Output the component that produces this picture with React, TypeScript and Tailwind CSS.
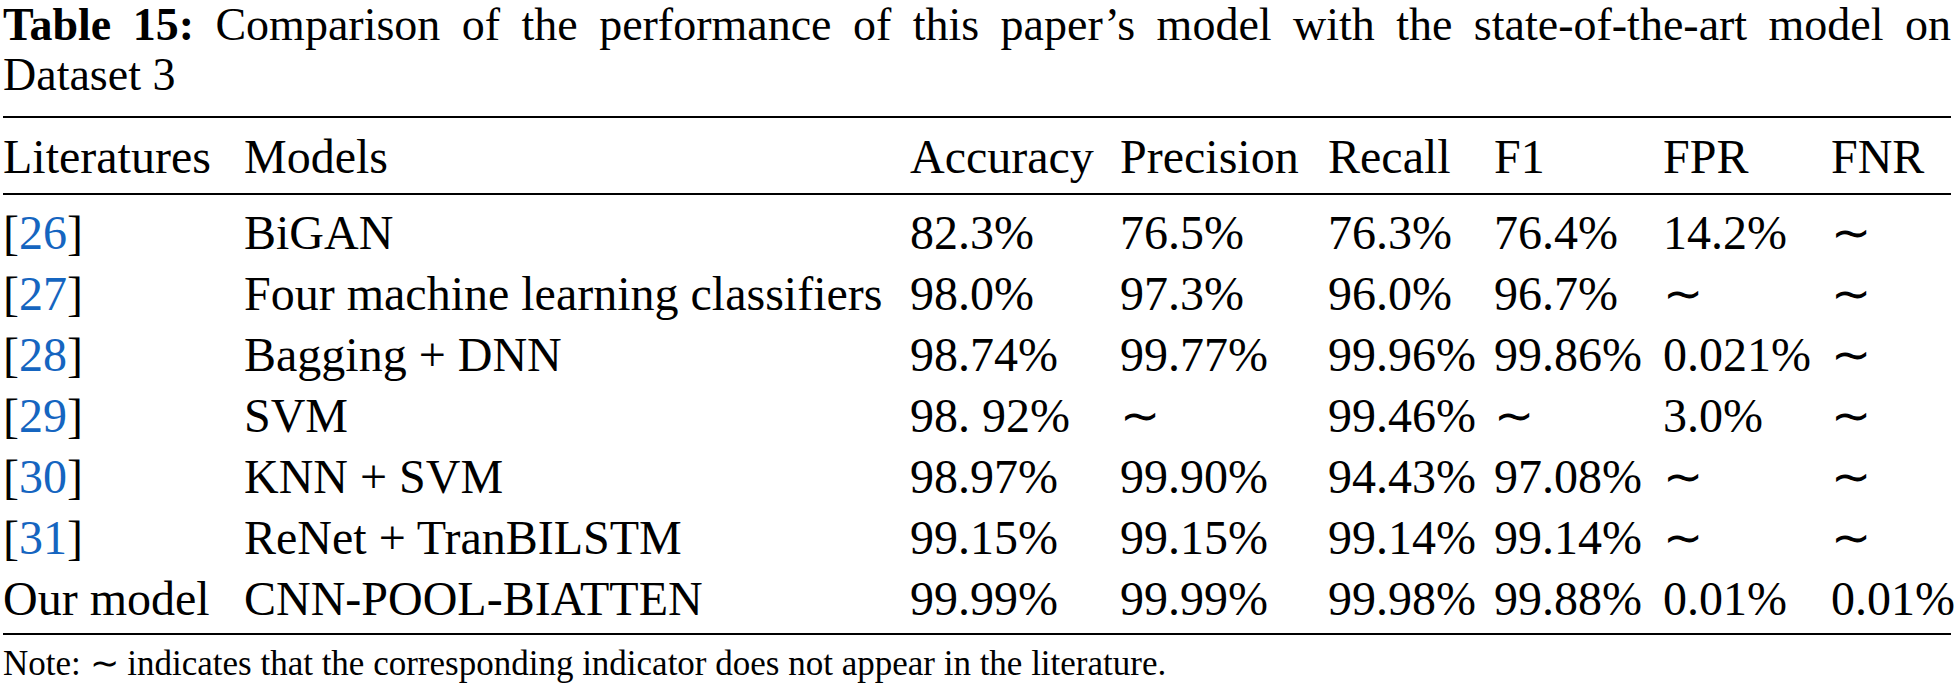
const T = "∼";

const rows = [
  { ref: "26", model: "BiGAN", vals: ["82.3%", "76.5%", "76.3%", "76.4%", "14.2%", T] },
  { ref: "27", model: "Four machine learning classifiers", vals: ["98.0%", "97.3%", "96.0%", "96.7%", T, T] },
  { ref: "28", model: "Bagging + DNN", vals: ["98.74%", "99.77%", "99.96%", "99.86%", "0.021%", T] },
  { ref: "29", model: "SVM", vals: ["98. 92%", T, "99.46%", T, "3.0%", T] },
  { ref: "30", model: "KNN + SVM", vals: ["98.97%", "99.90%", "94.43%", "97.08%", T, T] },
  { ref: "31", model: "ReNet + TranBILSTM", vals: ["99.15%", "99.15%", "99.14%", "99.14%", T, T] },
];

const headers = ["Literatures", "Models", "Accuracy", "Precision", "Recall", "F1", "FPR", "FNR"];

const gridCols = "grid grid-cols-[241px_666px_210px_208px_166px_169px_168px_1fr]";

const Rule = () => <div className="h-[2px] bg-black" />;

const Cell = ({ v }: { v: string }) => (
  <div className={`whitespace-nowrap ${v === T ? "font-extralight" : ""}`}>{v}</div>
);

export default function App() {
  return (
    <div className="w-[1954px] h-[692px] overflow-hidden bg-white px-[3px] text-black font-['Liberation_Serif']">
      <p className="text-[46px] leading-[50px] text-justify">
        <span className="font-bold">Table 15:</span> Comparison of the performance of this paper’s model with the
        state-of-the-art model on Dataset 3
      </p>

      <div className="mt-[16px]">
        <Rule />
        <div className={`${gridCols} pt-[8px] pb-[6px] text-[48px] leading-[61px]`}>
          {headers.map((h) => (
            <div key={h} className="whitespace-nowrap">{h}</div>
          ))}
        </div>
        <Rule />
        <div className="pt-[7px] pb-[4px] text-[48px] leading-[61px]">
          {rows.map((r) => (
            <div key={r.ref} className={gridCols}>
              <div>
                [<span className="text-[#1565c0]">{r.ref}</span>]
              </div>
              <div className="whitespace-nowrap">{r.model}</div>
              {r.vals.map((v, i) => (
                <Cell key={i} v={v} />
              ))}
            </div>
          ))}
          <div className={gridCols}>
            <div className="whitespace-nowrap">Our model</div>
            <div className="whitespace-nowrap">CNN-POOL-BIATTEN</div>
            {["99.99%", "99.99%", "99.98%", "99.88%", "0.01%", "0.01%"].map((v, i) => (
              <Cell key={i} v={v} />
            ))}
          </div>
        </div>
        <Rule />
      </div>

      <p className="mt-[9px] text-[35px] leading-[40px]">
        Note: <span className="font-extralight">{T}</span> indicates that the corresponding indicator does not appear
        in the literature.
      </p>
    </div>
  );
}
